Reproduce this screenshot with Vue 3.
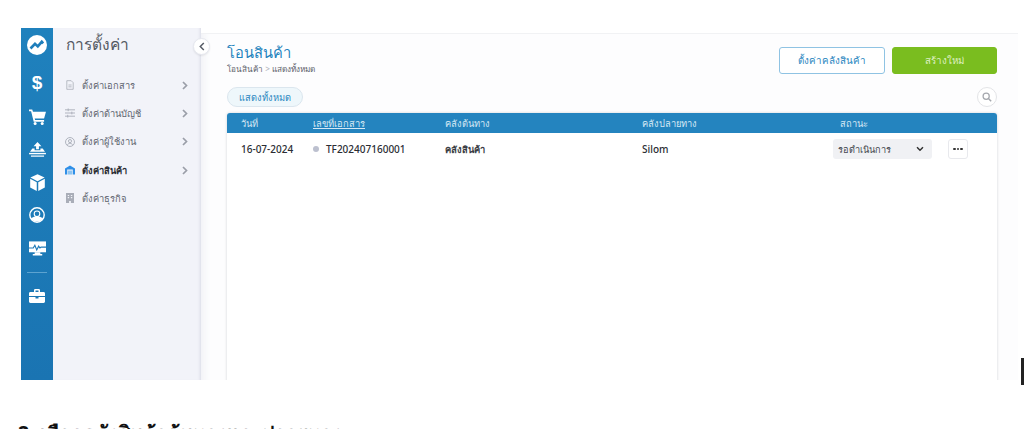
<script setup>
const menu = [
  { label: 'ตั้งค่าเอกสาร', icon: 'doc', arrow: true },
  { label: 'ตั้งค่าด้านบัญชี', icon: 'sliders', arrow: true },
  { label: 'ตั้งค่าผู้ใช้งาน', icon: 'user', arrow: true },
  { label: 'ตั้งค่าสินค้า', icon: 'warehouse', arrow: true, active: true },
  { label: 'ตั้งค่าธุรกิจ', icon: 'building', arrow: false }
]
</script>

<template>
  <div class="page">
    <div class="shell">
      <aside class="rail">
        <svg class="ri logo" viewBox="0 0 20 20"><circle cx="10" cy="10" r="10" fill="#fff"/><path d="M3.500 13.500 8 8.800l2.800 2.600 4-4.600 1.400 1.500" fill="none" stroke="#1e7ebb" stroke-width="2.600"/></svg>
        <span class="dollar">$</span>
        <svg class="ri cart" viewBox="0 0 18 17"><path d="M0 0.500h3.400l.8 2.500H18l-2 7.200H6l.4 1.500H16v1.800H5L2.200 2.300H0z" fill="#fff"/><circle cx="6.500" cy="15.300" r="1.600" fill="#fff"/><circle cx="14" cy="15.300" r="1.600" fill="#fff"/></svg>
        <svg class="ri upload" viewBox="0 0 18 16"><path d="M9 0l4.200 4.400h-2.700v3.400h-3V4.400H4.800z" fill="#fff"/><path d="M3.500 7h2.400v1.800h6.200V7h2.400L17 10.500H1z" fill="#fff"/><rect x="0" y="11.600" width="18" height="1.500" fill="#fff"/><rect x="2" y="14.400" width="14" height="1.300" fill="#fff"/></svg>
        <svg class="ri box" viewBox="0 0 16 18"><path d="M8 .2l7.600 3.500L8 7.600.4 3.700z" fill="#fff"/><path d="M.2 5l7 3.700V18L.2 14.300z" fill="#fff"/><path d="M15.800 5l-7 3.700V18l7-3.700z" fill="#fff"/></svg>
        <svg class="ri gauge" viewBox="0 0 16 16"><circle cx="8" cy="8" r="7.200" fill="none" stroke="#fff" stroke-width="1.400"/><circle cx="8" cy="6.800" r="2.800" fill="none" stroke="#fff" stroke-width="1.100"/><path d="M2 11.200C4 9.800 6 9.400 8 9.400s4 .4 6 1.800A7 7 0 0 1 2 11.200z" fill="#fff"/></svg>
        <svg class="ri monitor" viewBox="0 0 18 15"><path d="M0 0h18v11.500H0z" fill="#fff"/><path d="M6 11.500h6v1.800h2V15H4v-1.700h2z" fill="#fff"/><path d="M0 7h4.500l1.700-3 2 5 2-4 1.400 2 1.200-1H18" fill="none" stroke="#1e7ab8" stroke-width="1.200"/></svg>
        <div class="rule"></div>
        <svg class="ri case" viewBox="0 0 16 14"><path d="M5 3V1.300C5 .6 5.500 0 6.200 0h3.600C10.500 0 11 .6 11 1.300V3h3.600c.8 0 1.400.6 1.400 1.400V7H0V4.400C0 3.600.6 3 1.400 3zm1.500 0h3V1.500h-3z" fill="#fff" fill-rule="evenodd"/><path d="M0 8h6.500v1.500h3V8H16v4.600c0 .8-.6 1.400-1.400 1.400H1.400C.6 14 0 13.400 0 12.600z" fill="#fff"/></svg>
      </aside>

      <nav class="side">
        <h2 class="side-title">การตั้งค่า</h2>
        <ul class="menu">
          <li v-for="m in menu" :key="m.label" class="item" :class="{ on: m.active }">
            <svg v-if="m.icon === 'doc'" class="mi" viewBox="0 0 10 12"><path d="M1 .6h5.500L9 3.100v8.300H1z" fill="none" stroke="#a9adb8" stroke-width="1"/><path d="M3 6h4M3 8.300h4" stroke="#a9adb8"/></svg>
            <svg v-else-if="m.icon === 'sliders'" class="mi wide" viewBox="0 0 11 10"><path d="M0 1.500h11M0 5h11M0 8.500h11" stroke="#a9adb8"/><path d="M3.500 0v3M7.500 3.500v3M3 7v3" stroke="#a9adb8"/></svg>
            <svg v-else-if="m.icon === 'user'" class="mi wide" viewBox="0 0 11 11"><circle cx="5.500" cy="5.500" r="4.900" fill="none" stroke="#a9adb8"/><circle cx="5.500" cy="4.500" r="1.700" fill="none" stroke="#a9adb8"/><path d="M2.600 9c.5-1.500 1.500-2 2.900-2s2.400.5 2.900 2" fill="none" stroke="#a9adb8"/></svg>
            <svg v-else-if="m.icon === 'warehouse'" class="mi wide" viewBox="0 0 11 10"><path d="M0 10V3.400L5.500 0 11 3.400V10H8.600V4.500H2.400V10z" fill="#2f8fe8"/><path d="M3 5.600h5V10H3z" fill="#8cc4f2"/></svg>
            <svg v-else class="mi" viewBox="0 0 9 11"><path d="M0 0h9v11H5.500V9h-2v2H0z" fill="#a9adb8"/><path d="M2 2h1.500v1.200H2zM5.500 2H7v1.200H5.500zM2 4.500h1.500v1.200H2zM5.500 4.500H7v1.200H5.500z" fill="#f2f3f9"/></svg>
            <span class="lbl">{{ m.label }}</span>
            <svg v-if="m.arrow" class="chev" viewBox="0 0 6 9"><path d="M1 1l3.500 3.500L1 8" fill="none" stroke="#9a9ea8" stroke-width="1.700"/></svg>
          </li>
        </ul>
        <button class="collapse" aria-label="ย่อ"><svg viewBox="0 0 6 9"><path d="M4.800 1L1.300 4.500l3.500 3.500" fill="none" stroke="#555b66" stroke-width="1.500"/></svg></button>
      </nav>

      <main class="main">
        <header class="head">
          <div>
            <h1 class="title">โอนสินค้า</h1>
            <div class="crumb">โอนสินค้า <span class="sep">&gt;</span> แสดงทั้งหมด</div>
          </div>
          <div class="actions">
            <button class="btn ghost">ตั้งค่าคลังสินค้า</button>
            <button class="btn primary">สร้างใหม่</button>
          </div>
        </header>

        <div class="filters">
          <span class="pill">แสดงทั้งหมด</span>
          <span class="search"><svg viewBox="0 0 12 12"><circle cx="5" cy="5" r="3.700" fill="none" stroke="#a5a8ae" stroke-width="1.500"/><path d="M8 8l3 3" stroke="#a5a8ae" stroke-width="1.800"/></svg></span>
        </div>

        <section class="card">
          <div class="row th">
            <span>วันที่</span>
            <span class="u">เลขที่เอกสาร</span>
            <span>คลังต้นทาง</span>
            <span>คลังปลายทาง</span>
            <span>สถานะ</span>
          </div>
          <div class="row td">
            <span class="date">16-07-2024</span>
            <span class="doc"><i class="dot"></i>TF202407160001</span>
            <span class="src">คลังสินค้า</span>
            <span class="dst">Silom</span>
            <span class="stat">
              <span class="select">รอดำเนินการ<svg viewBox="0 0 8 6"><path d="M1 1.200l3 3 3-3" fill="none" stroke="#333" stroke-width="1.500"/></svg></span>
              <span class="more"><b></b><b></b><b></b></span>
            </span>
          </div>
        </section>
      </main>
    </div>
    <p class="cut">2. เลือกคลังสินค้าต้นทางและปลายทาง</p>
    <div class="edge"></div>
  </div>
</template>

<style>
html, body { margin: 0; background: #fff; }
</style>

<style scoped>
.page { position: relative; width: 1024px; height: 429px; overflow: hidden; background: #fff; font-family: "Noto Sans", "Liberation Sans", sans-serif; padding: 28px 0 0 21px; box-sizing: border-box; }
.shell { display: flex; width: 997px; height: 352px; }
.rail { width: 32px; flex: none; background: linear-gradient(#1f81bd, #1a74b2); display: flex; flex-direction: column; align-items: center; box-sizing: border-box; padding-top: 7px; }
.ri { display: block; fill: #fff; flex: none; }
.logo { width: 20px; height: 20px; }
.dollar { color: #fff; font: 700 19px/22px "Liberation Sans", sans-serif; margin-top: 17px; }
.cart { width: 17px; height: 16px; margin-top: 15px; }
.upload { width: 17px; height: 15px; margin-top: 17px; }
.box { width: 15px; height: 17px; margin-top: 17px; }
.gauge { width: 16px; height: 16px; margin-top: 16px; }
.monitor { width: 17px; height: 15px; margin-top: 18px; }
.rule { width: 20px; height: 1px; background: #5da3d0; margin-top: 16px; }
.case { width: 16px; height: 14px; margin-top: 16px; }

.side { position: relative; width: 148px; flex: none; background: #f2f3f9; box-shadow: inset -3px 0 3px -2px #d9dbe6; box-sizing: border-box; padding: 6px 0 0 12px; }
.side-title { margin: 0 0 0 1px; font-size: 15.500px; line-height: 21px; font-weight: 500; color: #555a63; }
.menu { list-style: none; margin: 16px 0 0; padding: 0; }
.item { display: flex; align-items: center; height: 28.300px; font-size: 9.300px; font-weight: 500; color: #5f6570; position: relative; }
.item.on { color: #2a2d33; font-weight: 700; }
.mi { width: 8px; height: 10px; margin: 0 8px 0 1px; flex: none; }
.mi.wide { width: 10px; margin: 0 7px 0 0; }
.lbl { white-space: nowrap; }
.chev { position: absolute; left: 117px; width: 6px; height: 9px; }
.collapse { position: absolute; right: -9px; top: 10px; width: 17px; height: 17px; padding: 0; border: 1px solid #e6e8ef; border-radius: 50%; background: #fff; display: flex; align-items: center; justify-content: center; box-shadow: 0 1px 2px rgba(0,0,0,.08); z-index: 2; }
.collapse svg { width: 6px; height: 9px; }

.main { flex: 1; background: #fdfdfe; border-top: 1px solid #f1f2f4; box-shadow: inset 12px 0 10px -10px #eeeff4; box-sizing: border-box; padding: 0 21px 0 26px; margin-top: 5px; min-width: 0; display: flex; flex-direction: column; height: 347px; overflow: hidden; }
.head { display: flex; justify-content: space-between; padding-top: 8px; height: 47px; box-sizing: border-box; }
.title { margin: 0; font-size: 14.700px; line-height: 20px; font-weight: 500; color: #1f83bd; }
.crumb { font-size: 8.200px; line-height: 11px; font-weight: 500; color: #5c616a; margin-top: 1px; white-space: nowrap; }
.sep { color: #b0b3ba; }
.actions { display: flex; gap: 7px; margin-top: 5px; }
.btn { width: 106px; height: 27px; border-radius: 3px; font: inherit; font-size: 9.800px; font-weight: 500; padding: 0; }
.ghost { background: #fff; border: 1px solid #8fc3e3; color: #2a86c0; }
.primary { background: #7abd1f; border: 1px solid #7abd1f; color: #dff0c4; width: 105px; }
.filters { display: flex; justify-content: space-between; align-items: center; height: 20px; margin-top: 6px; }
.pill { display: inline-flex; align-items: center; justify-content: center; width: 76px; height: 20px; box-sizing: border-box; background: #eef7fb; border: 1px solid #dbe6ee; border-radius: 10px; color: #2a86c0; font-size: 9.300px; font-weight: 500; }
.search { width: 20px; height: 20px; box-sizing: border-box; border: 1px solid #e3e4e7; border-radius: 50%; background: #fff; display: flex; align-items: center; justify-content: center; }
.search svg { width: 10px; height: 10px; }
.card { margin-top: 6px; flex: 1 0 auto; margin-bottom: -6px; background: #fff; border-radius: 3px 3px 0 0; box-shadow: 0 0 3px rgba(40,50,70,.2); overflow: hidden; }
.row { display: grid; grid-template-columns: 72px 132px 197px 198px 1fr; padding-left: 14px; align-items: center; font-size: 9.300px; }
.th { height: 20px; background: #2484bf; color: #d5e8f4; }
.u { text-decoration: underline; }
.td { height: 32px; color: #2a2d33; font-size: 10px; font-weight: 500; }
.src { font-size: 9.400px; font-weight: 700; color: #3a3d44; }
.dot { width: 6px; height: 6px; border-radius: 50%; background: #bcc0cf; margin-right: 7px; }
.doc { display: flex; align-items: center; }
.stat { display: flex; align-items: center; margin-left: -7px; }
.select { width: 99px; height: 20px; box-sizing: border-box; background: #f0f1f4; border-radius: 3px; padding: 0 5px; display: flex; align-items: center; justify-content: space-between; font-size: 9.200px; color: #44484f; }
.select svg { width: 8px; height: 6px; margin-right: 3px; }
.more { margin-left: 16px; width: 20px; height: 20px; box-sizing: border-box; border: 1px solid #e8e9ed; border-radius: 3px; background: #fff; display: flex; align-items: center; justify-content: center; gap: 1px; }
.more b { width: 2.500px; height: 2.500px; border-radius: 50%; background: #333; }
.cut { position: absolute; left: 18px; top: 418px; margin: 0; font-size: 19.500px; line-height: 30px; font-weight: 700; color: #111; white-space: nowrap; }
.edge { position: absolute; left: 1021px; top: 358px; width: 3px; height: 27px; background: #222; }
</style>
